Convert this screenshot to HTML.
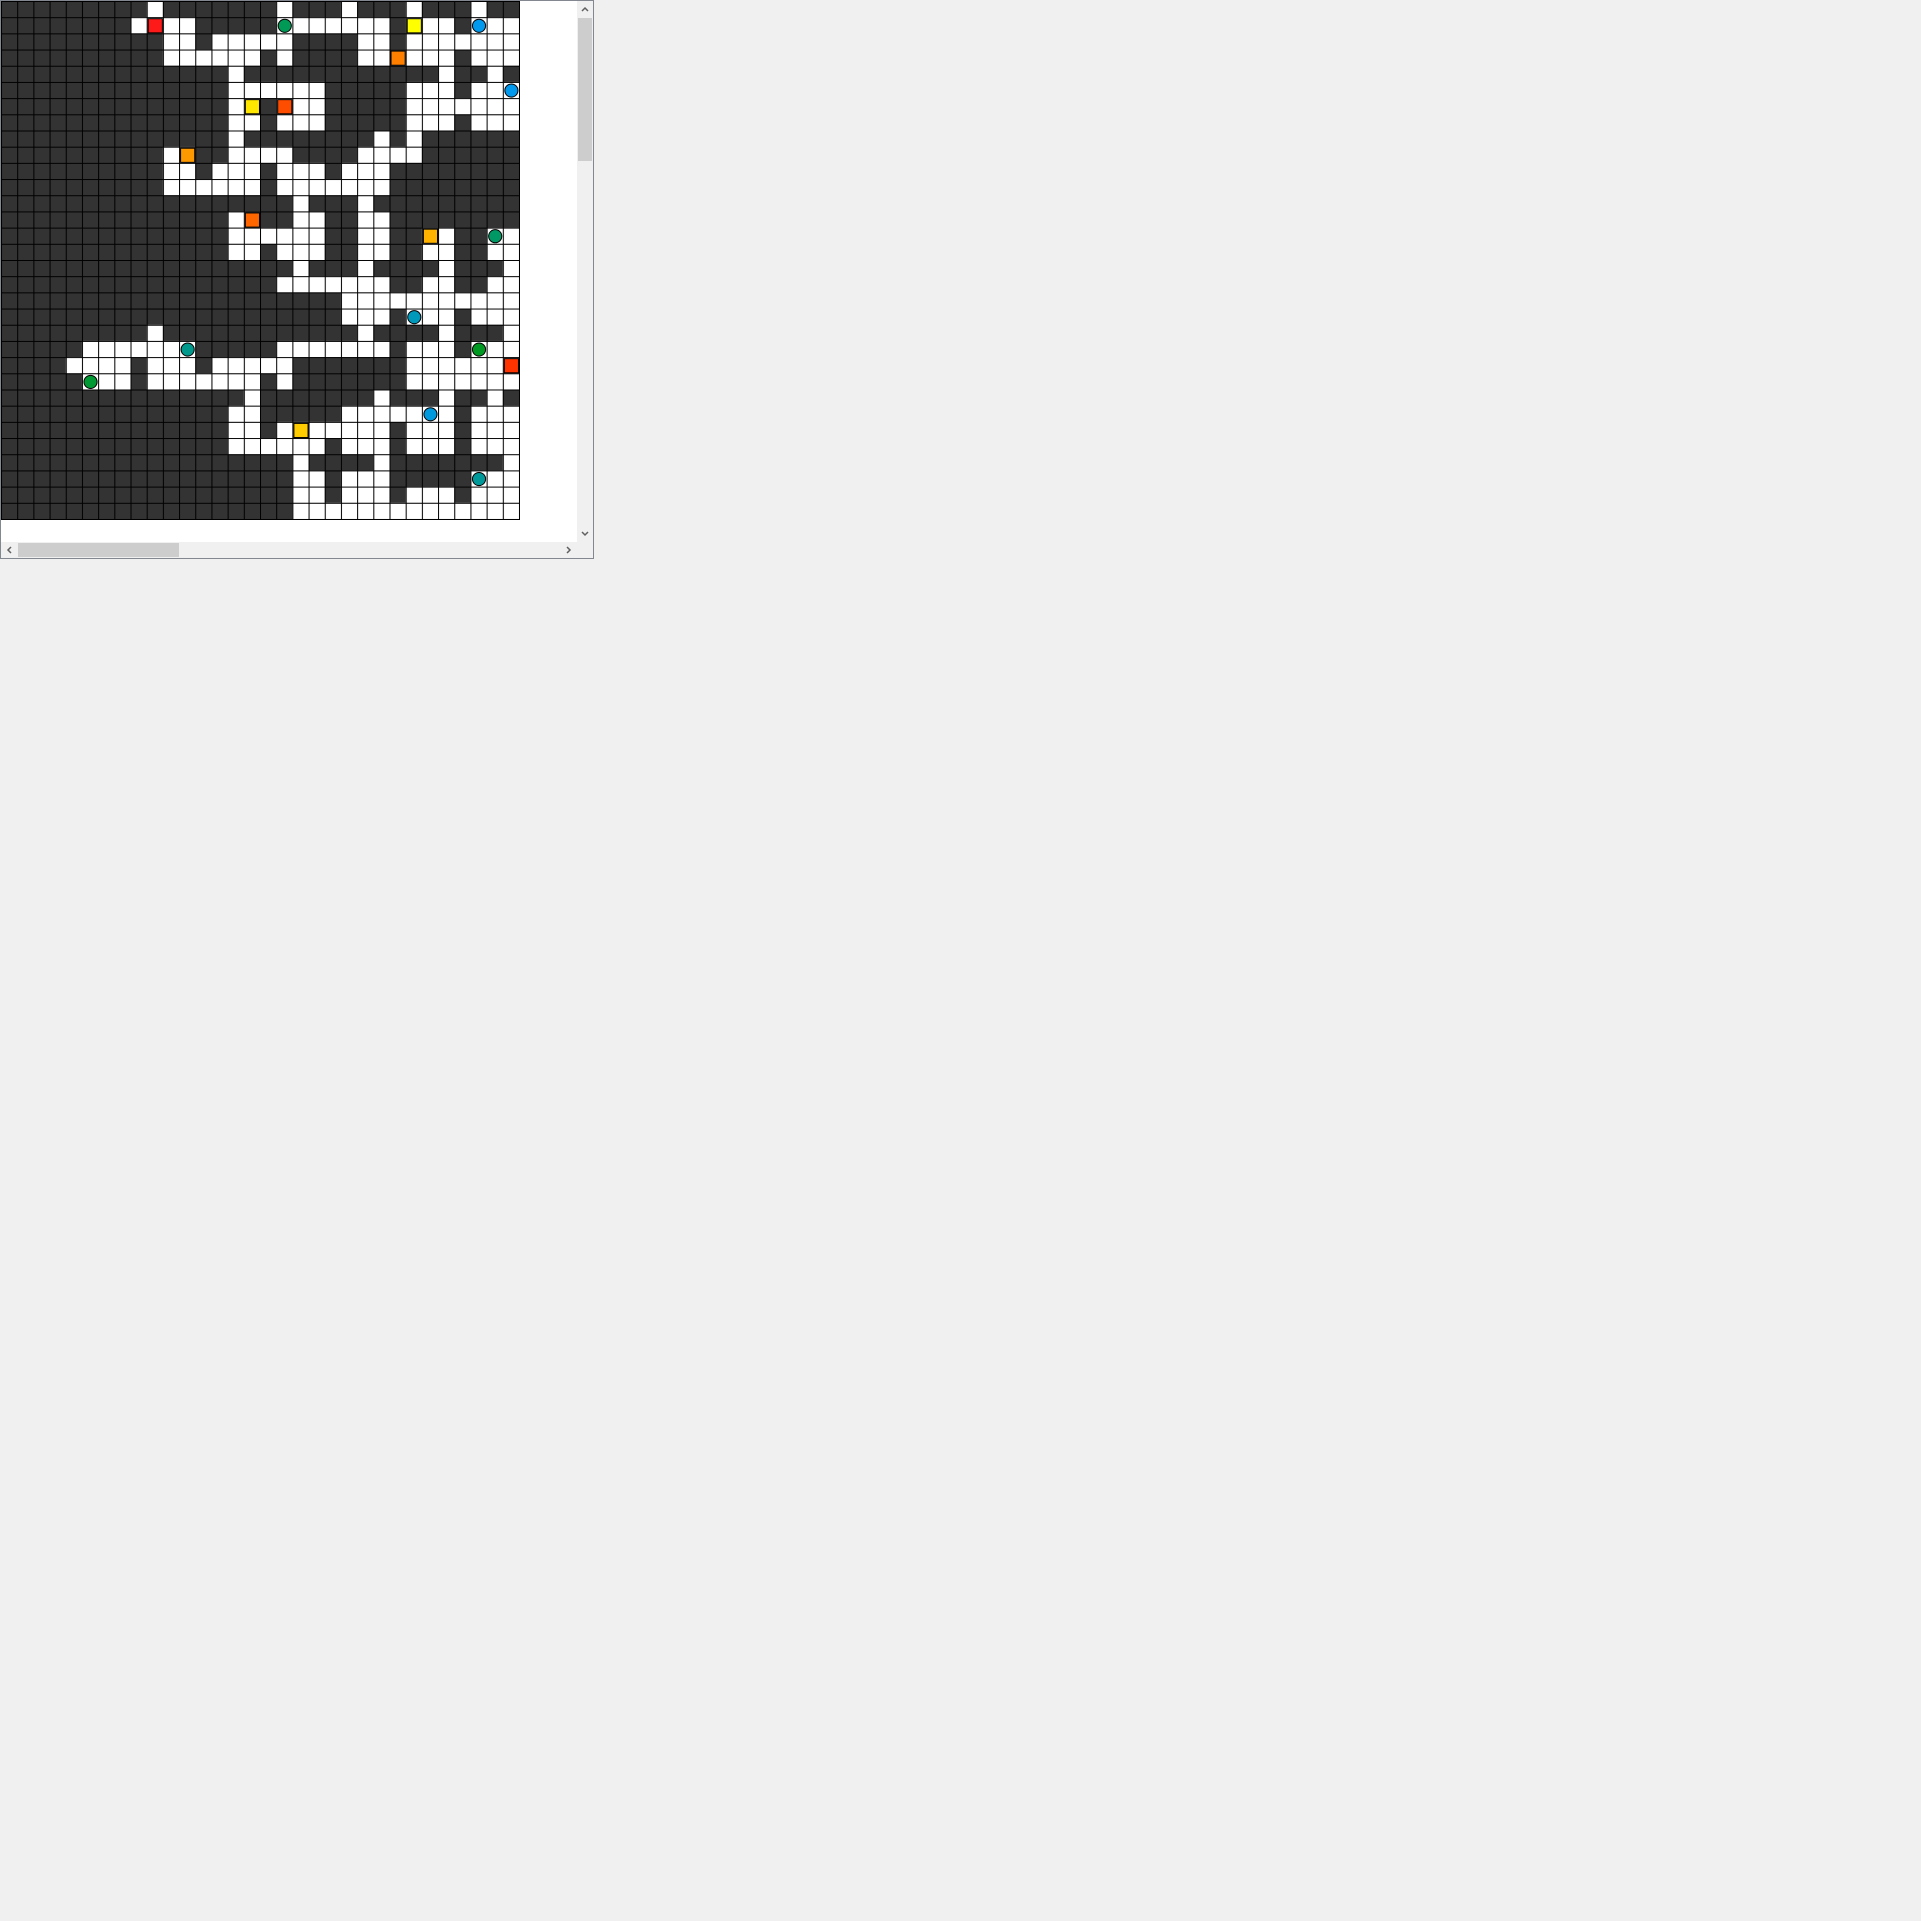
<!DOCTYPE html>
<html><head><meta charset="utf-8"><style>
html,body{margin:0;padding:0;background:#f0f0f0;width:1921px;height:1921px;overflow:hidden;font-family:"Liberation Sans",sans-serif}
#win{position:absolute;left:0;top:0;width:592px;height:557px;border:1px solid #828790;background:#fff}
#grid{position:absolute;left:0;top:0}
.vs{position:absolute;left:576px;top:0;width:16px;height:541px;background:#f0f0f0}
.hs{position:absolute;left:0;top:541px;width:576px;height:16px;background:#f0f0f0}
.corner{position:absolute;left:576px;top:541px;width:16px;height:16px;background:#f0f0f0}
.vt{position:absolute;left:1px;top:17px;width:14px;height:143px;background:#cdcdcd}
.ht{position:absolute;left:17px;top:1px;width:161px;height:14px;background:#cdcdcd}
svg.a{position:absolute}
</style></head><body>
<div id="win">
<svg id="grid" width="519" height="519" viewBox="0 0 513 513">
<defs><pattern id="p" width="16" height="16" patternUnits="userSpaceOnUse"><path d="M0 .5H16M.5 0V16" stroke="#000" stroke-width="1" fill="none"/></pattern></defs>
<rect x="0" y="0" width="513" height="513" fill="#333"/>
<g fill="#fff">
<rect x="144" y="0" width="16" height="16"/><rect x="272" y="0" width="16" height="16"/><rect x="336" y="0" width="16" height="16"/><rect x="400" y="0" width="16" height="16"/><rect x="464" y="0" width="16" height="16"/>
<rect x="128" y="16" width="64" height="16"/><rect x="272" y="16" width="112" height="16"/><rect x="400" y="16" width="48" height="16"/><rect x="464" y="16" width="48" height="16"/>
<rect x="160" y="32" width="32" height="16"/><rect x="208" y="32" width="80" height="16"/><rect x="352" y="32" width="32" height="16"/><rect x="400" y="32" width="112" height="16"/>
<rect x="160" y="48" width="96" height="16"/><rect x="272" y="48" width="16" height="16"/><rect x="352" y="48" width="96" height="16"/><rect x="464" y="48" width="48" height="16"/>
<rect x="224" y="64" width="16" height="16"/><rect x="432" y="64" width="16" height="16"/><rect x="480" y="64" width="16" height="16"/>
<rect x="224" y="80" width="96" height="16"/><rect x="400" y="80" width="48" height="16"/><rect x="464" y="80" width="48" height="16"/>
<rect x="224" y="96" width="32" height="16"/><rect x="272" y="96" width="48" height="16"/><rect x="400" y="96" width="112" height="16"/>
<rect x="224" y="112" width="32" height="16"/><rect x="272" y="112" width="48" height="16"/><rect x="400" y="112" width="48" height="16"/><rect x="464" y="112" width="48" height="16"/>
<rect x="224" y="128" width="16" height="16"/><rect x="368" y="128" width="16" height="16"/><rect x="400" y="128" width="16" height="16"/>
<rect x="160" y="144" width="32" height="16"/><rect x="224" y="144" width="64" height="16"/><rect x="352" y="144" width="64" height="16"/>
<rect x="160" y="160" width="32" height="16"/><rect x="208" y="160" width="48" height="16"/><rect x="272" y="160" width="48" height="16"/><rect x="336" y="160" width="48" height="16"/>
<rect x="160" y="176" width="96" height="16"/><rect x="272" y="176" width="112" height="16"/>
<rect x="288" y="192" width="16" height="16"/><rect x="352" y="192" width="16" height="16"/>
<rect x="224" y="208" width="32" height="16"/><rect x="288" y="208" width="32" height="16"/><rect x="352" y="208" width="32" height="16"/>
<rect x="224" y="224" width="96" height="16"/><rect x="352" y="224" width="32" height="16"/><rect x="416" y="224" width="32" height="16"/><rect x="480" y="224" width="32" height="16"/>
<rect x="224" y="240" width="32" height="16"/><rect x="272" y="240" width="48" height="16"/><rect x="352" y="240" width="32" height="16"/><rect x="416" y="240" width="32" height="16"/><rect x="480" y="240" width="32" height="16"/>
<rect x="288" y="256" width="16" height="16"/><rect x="352" y="256" width="16" height="16"/><rect x="432" y="256" width="16" height="16"/><rect x="496" y="256" width="16" height="16"/>
<rect x="272" y="272" width="112" height="16"/><rect x="416" y="272" width="32" height="16"/><rect x="480" y="272" width="32" height="16"/>
<rect x="336" y="288" width="176" height="16"/>
<rect x="336" y="304" width="48" height="16"/><rect x="400" y="304" width="48" height="16"/><rect x="464" y="304" width="48" height="16"/>
<rect x="144" y="320" width="16" height="16"/><rect x="352" y="320" width="16" height="16"/><rect x="432" y="320" width="16" height="16"/><rect x="496" y="320" width="16" height="16"/>
<rect x="80" y="336" width="112" height="16"/><rect x="272" y="336" width="112" height="16"/><rect x="400" y="336" width="48" height="16"/><rect x="464" y="336" width="48" height="16"/>
<rect x="64" y="352" width="64" height="16"/><rect x="144" y="352" width="48" height="16"/><rect x="208" y="352" width="80" height="16"/><rect x="400" y="352" width="112" height="16"/>
<rect x="80" y="368" width="48" height="16"/><rect x="144" y="368" width="112" height="16"/><rect x="272" y="368" width="16" height="16"/><rect x="400" y="368" width="112" height="16"/>
<rect x="240" y="384" width="16" height="16"/><rect x="368" y="384" width="16" height="16"/><rect x="432" y="384" width="16" height="16"/><rect x="480" y="384" width="16" height="16"/>
<rect x="224" y="400" width="32" height="16"/><rect x="336" y="400" width="112" height="16"/><rect x="464" y="400" width="48" height="16"/>
<rect x="224" y="416" width="32" height="16"/><rect x="272" y="416" width="112" height="16"/><rect x="400" y="416" width="48" height="16"/><rect x="464" y="416" width="48" height="16"/>
<rect x="224" y="432" width="96" height="16"/><rect x="336" y="432" width="48" height="16"/><rect x="400" y="432" width="48" height="16"/><rect x="464" y="432" width="48" height="16"/>
<rect x="288" y="448" width="16" height="16"/><rect x="368" y="448" width="16" height="16"/><rect x="496" y="448" width="16" height="16"/>
<rect x="288" y="464" width="32" height="16"/><rect x="336" y="464" width="48" height="16"/><rect x="464" y="464" width="48" height="16"/>
<rect x="288" y="480" width="32" height="16"/><rect x="336" y="480" width="48" height="16"/><rect x="400" y="480" width="48" height="16"/><rect x="464" y="480" width="48" height="16"/>
<rect x="288" y="496" width="224" height="16"/>
</g>
<rect x="0" y="0" width="513" height="513" fill="url(#p)"/>
<rect x="0.5" y="0.5" width="512" height="512" fill="none" stroke="#000"/>
<g stroke="#000" stroke-width="1">
<rect x="145.5" y="17.5" width="14" height="14" fill="#ff1a1a"/>
<rect x="401.5" y="17.5" width="14" height="14" fill="#ffff00"/>
<rect x="385.5" y="49.5" width="14" height="14" fill="#ff8000"/>
<rect x="241.5" y="97.5" width="14" height="14" fill="#ffe600"/>
<rect x="273.5" y="97.5" width="14" height="14" fill="#ff4d00"/>
<rect x="177.5" y="145.5" width="14" height="14" fill="#ff9900"/>
<rect x="241.5" y="209.5" width="14" height="14" fill="#ff6600"/>
<rect x="417.5" y="225.5" width="14" height="14" fill="#ffb300"/>
<rect x="497.5" y="353.5" width="14" height="14" fill="#ff3300"/>
<rect x="289.5" y="417.5" width="14" height="14" fill="#ffcc00"/>
<circle cx="280.5" cy="24.5" r="6.5" fill="#009955"/>
<circle cx="472.5" cy="24.5" r="6.5" fill="#0099ee"/>
<circle cx="504.5" cy="88.5" r="6.5" fill="#0099ee"/>
<circle cx="488.5" cy="232.5" r="6.5" fill="#009966"/>
<circle cx="408.5" cy="312.5" r="6.5" fill="#0099bb"/>
<circle cx="184.5" cy="344.5" r="6.5" fill="#00998c"/>
<circle cx="472.5" cy="344.5" r="6.5" fill="#009922"/>
<circle cx="88.5" cy="376.5" r="6.5" fill="#009933"/>
<circle cx="424.5" cy="408.5" r="6.5" fill="#0099dd"/>
<circle cx="472.5" cy="472.5" r="6.5" fill="#009999"/>
</g>
</svg>
<div class="vs"><div class="vt"></div>
<svg class="a" style="left:4px;top:5px" width="8" height="6"><path d="M1 5L4 2L7 5" stroke="#606060" stroke-width="1.5" fill="none"/></svg>
<svg class="a" style="left:4px;top:530px" width="8" height="6"><path d="M1 1L4 4L7 1" stroke="#606060" stroke-width="1.5" fill="none"/></svg>
</div>
<div class="hs"><div class="ht"></div>
<svg class="a" style="left:5px;top:4px" width="6" height="8"><path d="M5 1L2 4L5 7" stroke="#606060" stroke-width="1.5" fill="none"/></svg>
<svg class="a" style="left:565px;top:4px" width="6" height="8"><path d="M1 1L4 4L1 7" stroke="#606060" stroke-width="1.5" fill="none"/></svg>
</div>
<div class="corner"></div>
</div>
</body></html>
